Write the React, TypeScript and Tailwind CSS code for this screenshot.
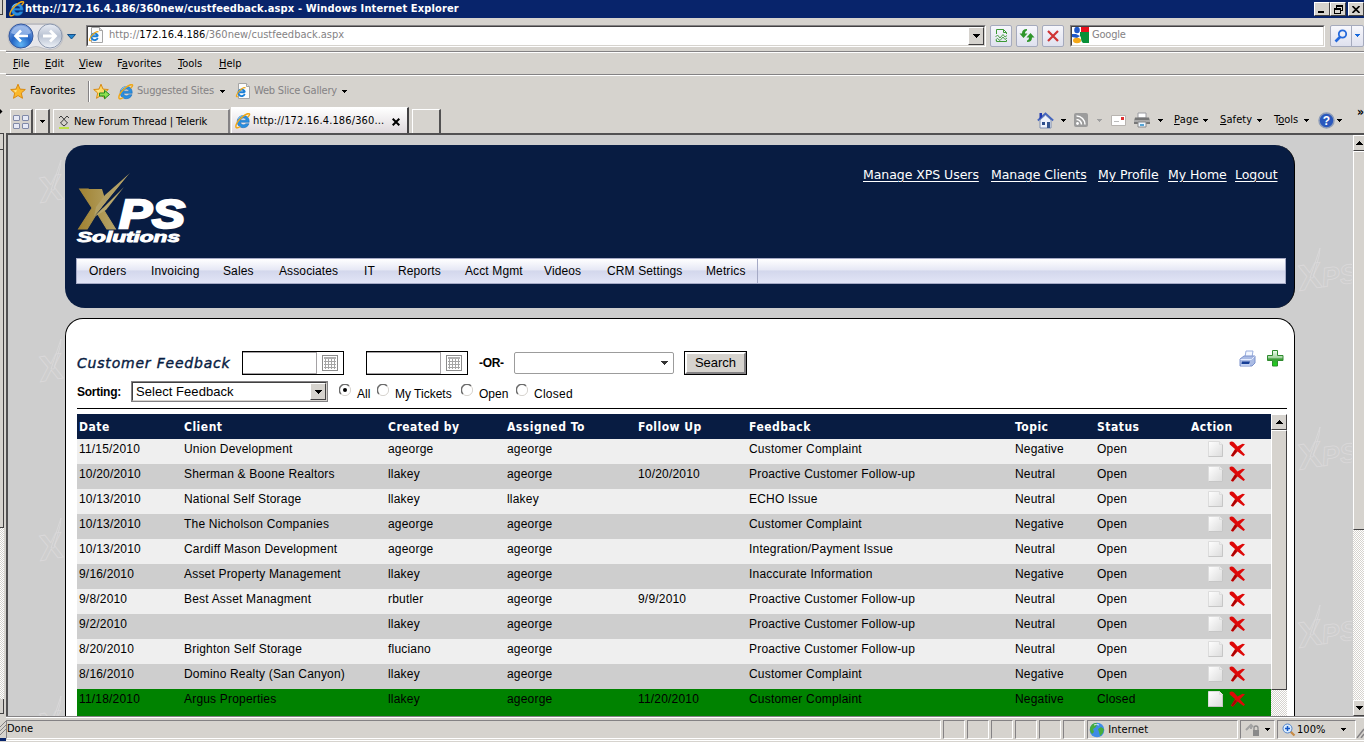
import React from "react";

const bevel = "bg-[#d6d3ce] border border-t-white border-l-white border-b-[#424142] border-r-[#424142]";
const sunken = "border border-t-[#848284] border-l-[#848284] border-b-white border-r-white";
const checker = "bg-[repeating-conic-gradient(#ffffff_0_25%,#d6d3ce_0_50%)] bg-[length:2px_2px]";
const ui = "font-['DejaVu_Sans_Condensed','DejaVu_Sans',sans-serif] text-[11px] whitespace-nowrap";

const Caret = ({ className = "", color = "#000" }: { className?: string; color?: string }) => (
  <svg width="7" height="4" viewBox="0 0 7 4" shapeRendering="crispEdges" className={`shrink-0 ${className}`}>
    <path d="M0 0h7v1h-1v1h-1v1h-1v1h-1v-1h-1v-1h-1v-1h-1z" fill={color} />
  </svg>
);

const SmallCaret = ({ className = "", color = "#000" }: { className?: string; color?: string }) => (
  <svg width="7" height="3" viewBox="0 0 7 3" shapeRendering="crispEdges" className={`shrink-0 ${className}`}>
    <path d="M1 0h5v1h-1v1h-1v1h-1v-1h-1v-1h-1z" fill={color} />
  </svg>
);

const UpArrow = () => (
  <svg width="7" height="4" viewBox="0 0 7 4" shapeRendering="crispEdges" className="shrink-0">
    <path d="M3 0h1v1h1v1h1v1h1v1h-7v-1h1v-1h1v-1h1z" />
  </svg>
);

const IeIcon = ({ size = 16, className = "" }: { size?: number; className?: string }) => (
  <svg width={size} height={size} viewBox="0 0 16 16" className={`shrink-0 ${className}`}>
    <path
      d="M14.2 9.3H5.6c.2 1.600 1.300 2.500 2.900 2.500 1 0 1.800-.4 2.300-1.100h3.200C13.100 13.200 11 14.700 8.400 14.700 4.800 14.700 2.200 12.200 2.200 8.700s2.600-6.200 6.200-6.200c3.700 0 6.100 2.700 5.800 6.800zM5.700 7.200h5.300C10.800 5.900 9.800 5.100 8.400 5.100S6 5.900 5.700 7.200z"
      fill="#2a8fe0"
      stroke="#1260b0"
      strokeWidth=".5"
    />
    <path d="M3.500 5.700C4.400 3.900 6.200 2.900 8.400 2.900" stroke="#8fd4ff" fill="none" />
    <path
      d="M12.600 4.300C14 2.900 15.200 1.700 14.500 1 13.500 0 9.800 1.600 6 5 2.200 8.300.2 12.700 1.100 14.300c.6 1 2.600.3 4.200-.8"
      stroke="#f0a818"
      strokeWidth="1.500"
      fill="none"
    />
  </svg>
);

const PageIeIcon = () => (
  <svg width="16" height="17" viewBox="0 0 16 17" className="shrink-0">
    <path d="M3.500.5h8l3 3v12h-11z" fill="#fbfbfb" stroke="#a5a5a5" />
    <path d="M11.500.5v3h3" fill="#ddd" stroke="#a5a5a5" />
    <path
      d="M9.900 9.300H4.500M9.700 11a3.300 3.300 0 11.200-1.700"
      fill="none"
      stroke="#1b7fd6"
      strokeWidth="1.900"
    />
    <path d="M10.500 5C9 3.800 5 6.500 3 9.500S.7 14.500 3 13.500" fill="none" stroke="#f0a818" strokeWidth="1.200" />
  </svg>
);

const Star = ({ add = false }: { add?: boolean }) => (
  <svg width="17" height="17" viewBox="0 0 17 17" className="shrink-0">
    <path
      d="M8 1.200l2 4.900 5.300.4-4 3.500 1.200 5.300L8 12.500l-4.500 2.800L4.700 10 .7 6.500 6 6.100z"
      fill={add ? "#fdd867" : "#fbb829"}
      stroke="#d98a12"
    />
    <path d="M8 3.500L6.800 7l-3.600.4L6 9.500z" fill="#ffe58d" />
    {add && <path d="M6.500 10h5V7.300l5 4.200-5 4.300V13h-5z" fill="#8ee04f" stroke="#218a21" />}
  </svg>
);

const ToolButton = ({ className = "w-[22px]", children }: { className?: string; children: React.ReactNode }) => (
  <div
    className={`h-[22px] shrink-0 rounded-[2px] border border-[#a5aabd] bg-linear-to-b from-[#f7f7fc] to-[#dfe1ee] flex items-center justify-center ${className}`}
  >
    {children}
  </div>
);

const TitleBar = () => (
  <div className="h-[18px] bg-[#08246b] flex items-center pl-[3px] text-white shrink-0">
    <IeIcon size={16} />
    <span className="font-['DejaVu_Sans_Condensed',sans-serif] font-bold text-[11px] tracking-[0.14px] w-[1292px] whitespace-nowrap">
      http://172.16.4.186/360new/custfeedback.aspx - Windows Internet Explorer
    </span>
    <div className={`w-4 h-[14px] shrink-0 ml-[7px] ${bevel} flex items-end pb-[2px] pl-[3px]`}>
      <div className="w-[6px] h-[2px] bg-black" />
    </div>
    <div className={`w-4 h-[14px] shrink-0 ${bevel} flex items-center justify-center`}>
      <svg width="9" height="9" viewBox="0 0 9 9" shapeRendering="crispEdges">
        <path d="M2 0h7v6h-2v-1h1v-3h-5v1h-1zM0 3h7v6h-7zM1 5v3h5v-3z" fillRule="evenodd" />
      </svg>
    </div>
    <div className={`w-4 h-[14px] shrink-0 ml-[2px] ${bevel} flex items-center justify-center`}>
      <svg width="8" height="7" viewBox="0 0 8 7">
        <path d="M.5 0l7 7M7.500 0l-7 7" stroke="#000" strokeWidth="1.600" />
      </svg>
    </div>
  </div>
);

const AddressBar = () => (
  <div className="h-[33px] flex items-center shrink-0 pt-[2px]">
    <svg width="72" height="30" viewBox="0 0 72 30" className="shrink-0">
      <defs>
        <radialGradient id="back" cx="50%" cy="85%" r="80%">
          <stop offset="0" stopColor="#5fb4f5" />
          <stop offset=".5" stopColor="#2465c4" />
          <stop offset="1" stopColor="#7c9fdc" />
        </radialGradient>
        <linearGradient id="fwd" x1="0" y1="0" x2="0" y2="1">
          <stop offset="0" stopColor="#e9edf5" />
          <stop offset=".5" stopColor="#b9c2d2" />
          <stop offset="1" stopColor="#eef2f8" />
        </linearGradient>
      </defs>
      <path d="M15 2h29a13 13 0 010 27c-7 0-9-3-14-3s-8 3-15 3a13 13 0 010-27z" fill="#c0c0c4" />
      <path d="M15 4h29a12 12 0 010 24c-7 0-9-3-14-3s-8 3-15 3z" fill="#e6e6ea" />
      <circle cx="15" cy="15" r="12" fill="url(#back)" stroke="#34599f" />
      <path d="M5 12a10.500 10.500 0 0120 0c-6 3-14 3-20 0z" fill="#b3cdf2" opacity=".65" />
      <path d="M22 15H10M15 9.500L9.500 15l5.500 5.500" stroke="#fff" strokeWidth="2.600" fill="none" />
      <circle cx="44" cy="15" r="12" fill="url(#fwd)" stroke="#8d99ae" />
      <path d="M37 15h12M44 9.500l5.500 5.500-5.500 5.500" stroke="#fff" strokeWidth="2.800" fill="none" />
      <path d="M61.500 13.500h8l-4 4.500z" fill="#2487d0" stroke="#174f86" />
    </svg>
    <div className={`ml-2 w-[900px] h-[22px] shrink-0 ${sunken}`}>
      <div className="h-full border border-t-[#424142] border-l-[#424142] border-b-[#d6d3ce] border-r-[#d6d3ce] bg-white flex items-center">
        <PageIeIcon />
        <span className={`${ui} text-[#848284] ml-[5px] flex-1`}>
          http://<span className="text-black">172.16.4.186</span>/360new/custfeedback.aspx
        </span>
        <div className={`w-4 h-[18px] ${bevel} flex items-center justify-center`}>
          <Caret />
        </div>
      </div>
    </div>
    <ToolButton className="ml-1 w-[22px]">
      <svg width="13" height="15" viewBox="0 0 13 15" fill="none" stroke="#3c9a35">
        <path d="M1.500 6V1.500h7l3 3V6M8.500 1.500v3h3M1.500 12v1.500h10V12" />
        <path d="M.5 9l2-2 2.500 3 3-3.500 2 2.500 2-1.500M.5 12l2-1.500 2.500 2 3-3.500 2 2.500 2-1.500" strokeWidth=".9" />
      </svg>
    </ToolButton>
    <ToolButton className="ml-1 w-[22px]">
      <svg width="16" height="15" viewBox="0 0 16 15">
        <path d="M8 1C4.500 1 3 2.500 3 5.500H.5L4.500 10l4-4.500H6C6 4 6.500 3 8 2.500z" fill="#2f962b" />
        <path d="M8 14c3.500 0 5-1.500 5-4.500h2.500L11.500 5l-4 4.500H10c0 1.500-.5 2.500-2 3z" fill="#2f962b" />
      </svg>
    </ToolButton>
    <ToolButton className="ml-1 w-[22px]">
      <svg width="12" height="12" viewBox="0 0 12 12">
        <path d="M1 1l10 10M11 1L1 11" stroke="#cf3434" strokeWidth="2.200" />
      </svg>
    </ToolButton>
    <div className={`ml-[6px] w-[255px] h-[22px] shrink-0 ${sunken}`}>
      <div className="h-full border border-t-[#424142] border-l-[#424142] border-b-[#d6d3ce] border-r-[#d6d3ce] bg-white flex items-center">
        <svg width="17" height="17" viewBox="0 0 17 17" className="shrink-0">
          <path d="M9 0h8v5H9z" fill="#e8101c" />
          <path d="M8 5h9v11h-6C8 13 10 11 8 9z" fill="#089038" />
          <ellipse cx="5" cy="3" rx="2.800" ry="3.200" fill="#2058c8" />
          <path d="M0 7h4l4 2-3 2-5-1z" fill="#2058c8" />
          <ellipse cx="5" cy="13.500" rx="4" ry="2.800" fill="#f5a818" />
        </svg>
        <span className={`${ui} text-[#848284] ml-[3px] tracking-[-0.2px]`}>Google</span>
      </div>
    </div>
    <ToolButton className="ml-[5px] w-[22px] rounded-r-none">
      <svg width="14" height="14" viewBox="0 0 14 14" fill="none" stroke="#2469dc">
        <circle cx="8.500" cy="5" r="3.700" strokeWidth="1.800" />
        <path d="M6 8L1.500 12.500" strokeWidth="2.600" />
      </svg>
    </ToolButton>
    <ToolButton className="w-[13px] rounded-l-none -ml-px">
      <SmallCaret color="#1668dc" />
    </ToolButton>
  </div>
);

const menus = [
  { pre: "", key: "F", rest: "ile", w: "w-8" },
  { pre: "", key: "E", rest: "dit", w: "w-[34px]" },
  { pre: "", key: "V", rest: "iew", w: "w-[38px]" },
  { pre: "F", key: "a", rest: "vorites", w: "w-[61px]" },
  { pre: "", key: "T", rest: "ools", w: "w-[41px]" },
  { pre: "", key: "H", rest: "elp", w: "w-10" },
];

const MenuBar = () => (
  <div className={`h-[23px] shrink-0 border-t border-[#848284] flex items-center pl-[7px] shadow-[inset_0_1px_0_#fff] ${ui}`}>
    {menus.map((m) => (
      <span key={m.rest} className={`${m.w} pt-[3px]`}>
        {m.pre}
        <u>{m.key}</u>
        {m.rest}
      </span>
    ))}
  </div>
);

const FavoritesBar = () => (
  <div className={`h-[34px] shrink-0 border-t border-[#848284] shadow-[inset_0_1px_0_#fff] flex items-center pl-1 ${ui}`}>
    <Star />
    <span className="ml-[3px] w-[58px] tracking-[0.1px]">Favorites</span>
    <div className="w-[2px] h-[21px] bg-[#848284] border-r border-white mr-[3px]" />
    <Star add />
    <IeIcon className="ml-[8px]" />
    <span className="ml-[3px] w-[82px] text-[#848284] tracking-[-0.2px]">Suggested Sites</span>
    <SmallCaret />
    <div className="w-[9px]" />
    <PageIeIcon />
    <span className="ml-[3px] w-[87px] text-[#848284] tracking-[-0.2px]">Web Slice Gallery</span>
    <SmallCaret />
  </div>
);

const CommandBar = () => (
  <div className={`flex items-center h-5 mb-[3px] ${ui}`}>
    <svg width="17" height="17" viewBox="0 0 17 17" className="shrink-0">
      <path d="M3 8v8h11V8L8.500 3z" fill="#eef2fb" stroke="#7f8fb0" />
      <path d="M.8 8.500L8.500 1.500l7.700 7" fill="none" stroke="#4565bd" strokeWidth="1.700" />
      <path d="M2.500 1h2.500v4l-2.500 2z" fill="#2038b0" />
      <path d="M5 10h3v3H5z" fill="#2c4d8c" />
      <path d="M10 10h3v6h-3z" fill="#35558f" />
    </svg>
    <SmallCaret className="ml-[6px]" />
    <svg width="14" height="14" viewBox="0 0 14 14" className="ml-[7px] shrink-0">
      <rect width="14" height="14" rx="2" fill="#9c9c9c" />
      <circle cx="3.500" cy="10.500" r="1.400" fill="#fff" />
      <path d="M2.500 6.500a5 5 0 015 5M2.500 3a8.500 8.500 0 018.500 8.500" stroke="#fff" strokeWidth="1.500" fill="none" />
    </svg>
    <SmallCaret className="ml-[8px]" color="#a0a0a0" />
    <svg width="15" height="11" viewBox="0 0 15 11" className="ml-[8px] shrink-0">
      <path d="M.5.500h14v10H.500z" fill="#fff" stroke="#b8b4b0" />
      <path d="M10 2h3v3h-3z" fill="#e03030" />
      <path d="M3 6.500h5" stroke="#bbb" />
    </svg>
    <svg width="16" height="16" viewBox="0 0 16 16" className="ml-[8px] shrink-0">
      <path d="M4 1h8v5H4z" fill="#fff" stroke="#9a9aa0" />
      <path d="M1 5.500h14l1 4v2.500H0V9.500z" fill="#777" />
      <path d="M0 8h16v2H0z" fill="#aaa" />
      <path d="M4 10h8v5H4z" fill="#eef6ff" stroke="#8a8a8a" />
      <path d="M6 12h4v2H6z" fill="#55a5d6" />
    </svg>
    <SmallCaret className="ml-[7px]" />
    <span className="ml-[10px] w-[28px] tracking-[0.2px]">
      <u>P</u>age
    </span>
    <SmallCaret />
    <span className="ml-[11px] w-[36px] tracking-[0.1px]">
      <u>S</u>afety
    </span>
    <SmallCaret />
    <span className="ml-[11px] w-[29px]">
      T<u>o</u>ols
    </span>
    <SmallCaret />
    <svg width="17" height="17" viewBox="0 0 17 17" className="ml-[8px] shrink-0">
      <circle cx="8.500" cy="8.500" r="7.500" fill="#2a58bd" stroke="#8f9db8" strokeWidth="1.500" />
      <text x="8.500" y="12.800" textAnchor="middle" fontSize="12" fontWeight="bold" fill="#fff" fontFamily="Liberation Sans">
        ?
      </text>
    </svg>
    <SmallCaret className="ml-px" />
    <span className="ml-[14px] mb-4 font-bold text-xs">»</span>
  </div>
);

const TabBar = () => (
  <div className={`h-[27px] shrink-0 flex items-end border-b-2 border-[#525152] pl-1 ${ui}`}>
    <div className="w-[23px] h-[24px] border-t border-l border-t-white border-l-white border-r-2 border-r-[#525152] flex items-center justify-center pt-px">
      <div className="grid grid-cols-2 gap-[2px]">
        {[0, 1, 2, 3].map((n) => (
          <div key={n} className="w-[7px] h-[6px] border border-[#8089a8] rounded-[1px] bg-[#e6e9f5]" />
        ))}
      </div>
    </div>
    <div className="ml-[2px] w-[15px] h-[24px] border-t border-l border-t-white border-l-white border-r-2 border-r-[#525152] flex items-center justify-center">
      <SmallCaret />
    </div>
    <div className="ml-[3px] w-[177px] h-[24px] border-t border-l border-t-white border-l-white border-r-2 border-r-[#848284] flex items-center">
      <svg width="12" height="14" viewBox="0 0 12 14" className="ml-1 shrink-0" fill="none">
        <path d="M1 3l2-2 6.500 7L6 11 2.500 8 9 1l2 2" stroke="#3a3a3a" />
        <path d="M1 13h10" stroke="#b5e61d" strokeWidth="1.500" />
      </svg>
      <span className="ml-[4px] pt-px tracking-[-0.07px]">New Forum Thread | Telerik</span>
    </div>
    <div className="ml-px w-[178px] h-[26px] border-t border-l border-t-white border-l-white border-r-2 border-r-[#424142] bg-linear-to-b from-white to-[#ded9dc] flex items-center">
      <IeIcon className="ml-[3px] mt-px" />
      <span className="ml-[2px] w-[139px] pt-[2px] tracking-[0.12px]">http://172.16.4.186/360...</span>
      <svg width="8" height="8" viewBox="0 0 8 8" className="mt-[3px]">
        <path d="M.7.700l6.600 6.600M7.300.700L.7 7.300" stroke="#000" strokeWidth="2" />
      </svg>
    </div>
    <div className="ml-[3px] w-[29px] h-[24px] border-t border-l border-t-white border-l-white border-r-2 border-r-[#525152]" />
    <div className="flex-1" />
    <CommandBar />
  </div>
);

const Watermark = ({ y, side }: { y: number; side: "left" | "right" }) => (
  <svg
    width={side === "left" ? 30 : 56}
    height="50"
    viewBox={side === "left" ? "0 0 30 50" : "0 0 56 50"}
    className={side === "left" ? "absolute left-[29px]" : "absolute right-px"}
    style={{ top: y }}
  >
    <g fill="none" stroke="#dbd9da" strokeWidth=".8" fontFamily="Liberation Sans" fontWeight="bold">
      <text transform="translate(3 45) rotate(-10) skewX(-6)" fontSize="36">
        X
      </text>
      <path d="M14 32L24 2l-1 8-6 22z" />
      {side === "right" && (
        <text transform="translate(27 41) rotate(-8)" fontSize="27" fontStyle="italic">
          PS
        </text>
      )}
    </g>
  </svg>
);

const Logo = () => (
  <svg width="115" height="76" viewBox="0 0 115 76" className="shrink-0">
    <defs>
      <linearGradient id="gold" gradientUnits="userSpaceOnUse" x1="3" y1="0" x2="42" y2="0">
        <stop offset="0" stopColor="#a08232" />
        <stop offset="1" stopColor="#b8a76c" />
      </linearGradient>
    </defs>
    <text
      x="2"
      y="56"
      fontFamily="Liberation Sans"
      fontWeight="bold"
      fontSize="57"
      fill="url(#gold)"
      stroke="url(#gold)"
      textLength="38"
      lengthAdjust="spacingAndGlyphs"
    >
      X
    </text>
    {/* the upper right arm gives way to the two swooshes */}
    <path d="M26.500 15H46L36 36 30 35 22 33 24 27z" fill="#081c42" />
    <path d="M11 16h15l4 13-7 8z" fill="url(#gold)" />
    <path d="M54 0L29 22l-9 12-2 10z" fill="#b3a064" />
    <path d="M18 44L54 0l-6 14z" fill="#081c42" />
    <path d="M48 14L18 44l12-7z" fill="#b8a76c" />
    <g fill="#fff" stroke="#fff" fontFamily="Liberation Sans" fontWeight="bold" fontStyle="italic">
      <text x="43" y="54.500" fontSize="41" textLength="66" lengthAdjust="spacingAndGlyphs" strokeWidth="2.400">
        PS
      </text>
      <text x="1" y="69" fontSize="14.500" textLength="103" lengthAdjust="spacingAndGlyphs" strokeWidth=".9">
        Solutions
      </text>
    </g>
  </svg>
);

const links = [
  { label: "Manage XPS Users", w: "w-[118px]" },
  { label: "Manage Clients", w: "w-[97px]" },
  { label: "My Profile", w: "w-[60px]" },
  { label: "My Home", w: "w-[57px]" },
  { label: "Logout", w: "w-11" },
];

const navItems = [
  { label: "Orders", w: "w-[62px]" },
  { label: "Invoicing", w: "w-[72px]" },
  { label: "Sales", w: "w-[56px]" },
  { label: "Associates", w: "w-[85px]" },
  { label: "IT", w: "w-[34px]" },
  { label: "Reports", w: "w-[67px]" },
  { label: "Acct Mgmt", w: "w-[79px]" },
  { label: "Videos", w: "w-[63px]" },
  { label: "CRM Settings", w: "w-[99px]" },
  { label: "Metrics", w: "w-[51px]" },
];

const SiteHeader = () => (
  <div className="h-[163px] shrink-0 rounded-[20px] bg-[#081c42] border-r border-black pl-[11px] pr-2">
    <div className="flex justify-between h-[113px] pt-[28px]">
      <Logo />
      <div className="flex gap-[10px] -mt-[7px] pr-[7px] h-5 font-['DejaVu_Sans',sans-serif] text-[12.500px] tracking-[-0.05px] text-white">
        {links.map((l) => (
          <a key={l.label} className={`${l.w} underline underline-offset-2 whitespace-nowrap`}>
            {l.label}
          </a>
        ))}
      </div>
    </div>
    <div className="h-[26px] border border-[#a5aac6] bg-[linear-gradient(#ffffff,#e6e8f5_45%,#d3d7ec_50%,#e2e5f6)] flex">
      <div className="w-[681px] pl-3 flex items-center border-r border-[#a5aac6] font-['Liberation_Sans',sans-serif] text-[12px] tracking-[0.12px]">
        {navItems.map((n) => (
          <span key={n.label} className={`${n.w} shrink-0 whitespace-nowrap`}>
            {n.label}
          </span>
        ))}
      </div>
    </div>
  </div>
);

const DateInput = ({ className = "" }: { className?: string }) => (
  <div className={`w-[102px] h-6 shrink-0 border border-black flex ${className}`}>
    <div className="w-[74px] border-r border-b border-t border-[#a5a2a5]" />
    <div className="flex-1 flex items-center justify-center">
      <svg width="16" height="16" viewBox="0 0 16 16" shapeRendering="crispEdges">
        <path d="M.5.500h15v15H.500z" fill="#fff" stroke="#8c8c8c" />
        <path d="M2 2h12v2H2z" fill="#b0b0b0" />
        <path d="M3.500 4v10M6.500 4v10M9.500 4v10M12.500 4v10M2 6.500h12M2 9.500h12M2 12.500h12" stroke="#a5a5a5" />
      </svg>
    </div>
  </div>
);

const Radio = ({ checked = false }: { checked?: boolean }) => (
  <svg width="12" height="12" viewBox="0 0 12 12" className="shrink-0 mb-[3px]">
    <circle cx="6" cy="6" r="5.300" fill="#fff" />
    <path d="M2 10A5.600 5.600 0 0110 2" fill="none" stroke="#6b6b6b" strokeWidth="1.500" />
    <path d="M2 10A5.600 5.600 0 0010 2" fill="none" stroke="#d6d3ce" />
    {checked && <circle cx="6" cy="6" r="2" />}
  </svg>
);

const PrintIcon = () => (
  <svg width="17" height="17" viewBox="0 0 17 17" className="shrink-0">
    <path d="M7 1h7l-1 6H6z" fill="#f3f7ff" stroke="#9aaede" />
    <path d="M1 9l4-3h11v7l-3 3H1z" fill="#aabbe4" stroke="#7c92cc" />
    <path d="M1.500 9.500h11l3-3" stroke="#e6edff" fill="none" />
    <path d="M3 11.500h8l-1 2.500H2.500z" fill="#183f96" />
    <path d="M2 15h9" stroke="#dfe8ff" />
  </svg>
);

const PlusIcon = () => (
  <svg width="17" height="17" viewBox="0 0 17 17" className="shrink-0">
    <defs>
      <linearGradient id="plus" x1="0" y1="0" x2="0" y2="1">
        <stop offset="0" stopColor="#f0fff0" />
        <stop offset=".45" stopColor="#a6d5a3" />
        <stop offset=".55" stopColor="#3f9b3a" />
        <stop offset="1" stopColor="#17df17" />
      </linearGradient>
    </defs>
    <path d="M5.500.5h5v5h5.500v5h-5.500v5.500h-5v-5.500H.500v-5h5z" fill="url(#plus)" stroke="#2f8b2f" />
  </svg>
);

const Filters = () => (
  <>
    <div className="flex items-center h-6 mt-[32px] pl-[11px] font-['Liberation_Sans',sans-serif]">
      <span className="w-[165px] shrink-0 font-['DejaVu_Sans',sans-serif] italic text-[14px] tracking-[0.8px] text-[#081c42] [-webkit-text-stroke:0.4px_#081c42] whitespace-nowrap">
        Customer Feedback
      </span>
      <DateInput />
      <DateInput className="ml-[22px]" />
      <span className="ml-[11px] w-[35px] font-bold text-[12px] tracking-[-0.3px]">-OR-</span>
      <div className="w-[160px] h-[22px] border border-[#9c9c9c] rounded-[2px] flex items-center justify-end pr-[5px]">
        <Caret color="#333" />
      </div>
      <div className="ml-[10px] w-[63px] h-6 border border-black">
        <div className="h-full border-2 border-t-white border-l-white border-b-[#848284] border-r-[#848284] bg-[#d6d3ce] flex items-center justify-center text-[13px]">
          Search
        </div>
      </div>
      <div className="ml-auto flex gap-[11px] pr-[10px] pb-[9px]">
        <PrintIcon />
        <PlusIcon />
      </div>
    </div>
    <div className="flex items-center h-[21px] mt-[6px] ml-[11px] font-['Liberation_Sans',sans-serif] text-[12px] whitespace-nowrap">
      <span className="w-[54px] shrink-0 font-bold tracking-[-0.25px]">Sorting:</span>
      <div className="w-[197px] h-[21px] shrink-0 border border-[#848284] mr-[11px]">
        <div className="h-full border border-t-[#424142] border-l-[#424142] border-b-[#d6d3ce] border-r-[#d6d3ce] flex items-center pl-[3px] text-[13px] tracking-[0.05px]">
          <span className="flex-1">Select Feedback</span>
          <div className={`w-4 h-[17px] ${bevel} flex items-center justify-center`}>
            <Caret />
          </div>
        </div>
      </div>
      <Radio checked />
      <span className="ml-[6px] w-5 pt-[4px]">All</span>
      <Radio />
      <span className="ml-[6px] w-[66px] pt-[4px]">My Tickets</span>
      <Radio />
      <span className="ml-[6px] w-[37px] pt-[4px]">Open</span>
      <Radio />
      <span className="ml-[6px] pt-[4px] tracking-[0.25px]">Closed</span>
    </div>
  </>
);

const DocIcon = () => (
  <svg width="15" height="16" viewBox="0 0 15 16" className="shrink-0">
    <defs>
      <linearGradient id="doc" x1="0" y1="0" x2="1" y2="1">
        <stop offset="0" stopColor="#fff" />
        <stop offset="1" stopColor="#dcdcdc" />
      </linearGradient>
    </defs>
    <path d="M.5.500h11l3 3v12H.500z" fill="url(#doc)" stroke="#dcdcdc" />
    <path d="M.5 15.500h14v-12" fill="none" stroke="#c6c6c6" />
    <path d="M11.500.5v3h3" fill="#eee" stroke="#ddd" />
  </svg>
);

const DeleteIcon = () => (
  <svg width="17" height="16" viewBox="0 0 17 16" className="shrink-0">
    <path
      d="M.5 1.500C1.500.3 3.500 0 5 1.500L8.500 5.500 13.500 2.800 16 3.300 11 8.200l5 5.600-1.500 1.200L8.500 10.500 4 15.800 1.800 14.700 6 8 .8 3.500z"
      fill="#de0808"
    />
    <path d="M6 9l-3.500 5.300 1.500 1L8 10z" fill="#a50505" />
  </svg>
);

interface Ticket {
  date: string;
  client: string;
  createdBy: string;
  assignedTo: string;
  followUp: string;
  feedback: string;
  topic: string;
  status: string;
}

const row = (
  date: string,
  client: string,
  createdBy: string,
  assignedTo: string,
  followUp: string,
  feedback: string,
  topic: string,
  status = "Open"
): Ticket => ({ date, client, createdBy, assignedTo, followUp, feedback, topic, status });

const tickets: Ticket[] = [
  row("11/15/2010", "Union Development", "ageorge", "ageorge", "", "Customer Complaint", "Negative"),
  row("10/20/2010", "Sherman & Boone Realtors", "llakey", "ageorge", "10/20/2010", "Proactive Customer Follow-up", "Neutral"),
  row("10/13/2010", "National Self Storage", "llakey", "llakey", "", "ECHO Issue", "Neutral"),
  row("10/13/2010", "The Nicholson Companies", "ageorge", "ageorge", "", "Customer Complaint", "Negative"),
  row("10/13/2010", "Cardiff Mason Development", "ageorge", "ageorge", "", "Integration/Payment Issue", "Neutral"),
  row("9/16/2010", "Asset Property Management", "llakey", "ageorge", "", "Inaccurate Information", "Negative"),
  row("9/8/2010", "Best Asset Managment", "rbutler", "ageorge", "9/9/2010", "Proactive Customer Follow-up", "Neutral"),
  row("9/2/2010", "", "llakey", "ageorge", "", "Proactive Customer Follow-up", "Neutral"),
  row("8/20/2010", "Brighton Self Storage", "fluciano", "ageorge", "", "Proactive Customer Follow-up", "Neutral"),
  row("8/16/2010", "Domino Realty (San Canyon)", "llakey", "ageorge", "", "Customer Complaint", "Negative"),
  row("11/18/2010", "Argus Properties", "llakey", "ageorge", "11/20/2010", "Customer Complaint", "Negative", "Closed"),
];

const columns = "grid grid-cols-[105px_204px_119px_131px_111px_266px_82px_94px_1fr] pl-[2px] whitespace-nowrap";

const FeedbackTable = () => (
  <div className="ml-[11px] mr-[7px] mt-[6px] border-t border-black pt-[5px] flex flex-1 min-h-0">
    <div className="flex-1 overflow-hidden">
      <div
        className={`${columns} h-[25px] items-center bg-[#081c42] text-white font-bold font-['DejaVu_Sans_Condensed',sans-serif] text-[12px] tracking-[0.5px]`}
      >
        {["Date", "Client", "Created by", "Assigned To", "Follow Up", "Feedback", "Topic", "Status", "Action"].map((h) => (
          <span key={h}>{h}</span>
        ))}
      </div>
      {tickets.map((t, i) => (
        <div
          key={i}
          className={`${columns} pt-[2px] leading-4 font-['Liberation_Sans',sans-serif] text-[12px] tracking-[0.19px] ${
            t.status === "Closed" ? "bg-[#008200] h-[28px]" : i % 2 ? "bg-[#cecece] h-[25px]" : "bg-[#efefef] h-[25px]"
          }`}
        >
          <span>{t.date}</span>
          <span>{t.client}</span>
          <span>{t.createdBy}</span>
          <span>{t.assignedTo}</span>
          <span>{t.followUp}</span>
          <span>{t.feedback}</span>
          <span>{t.topic}</span>
          <span>{t.status}</span>
          <span className="flex gap-[6px] pl-[17px]">
            <DocIcon />
            <DeleteIcon />
          </span>
        </div>
      ))}
    </div>
    <div className={`w-4 ${checker}`}>
      <div className={`h-4 ${bevel} flex items-center justify-center`}>
        <UpArrow />
      </div>
      <div className={`h-[260px] ${bevel}`} />
    </div>
  </div>
);

const PageContent = () => (
  <div className="flex-1 min-h-0 flex bg-[#cecece] border-l-2 border-[#525152] relative overflow-hidden">
    {[23, 202, 381, 559].map((y) => (
      <Watermark key={y} y={y} side="left" />
    ))}
    <div className="w-[1230px] ml-[57px] pt-[10px] flex flex-col shrink-0 z-10">
      <SiteHeader />
      <div className="mt-[10px] flex-1 min-h-0 flex flex-col bg-white border border-b-0 border-black rounded-t-[18px]">
        <Filters />
        <FeedbackTable />
      </div>
    </div>
    <div className="w-[58px] shrink-0 relative overflow-hidden">
      {[111, 290, 468].map((y) => (
        <Watermark key={y} y={y} side="right" />
      ))}
    </div>
    <div className={`flex-1 flex flex-col ${checker}`}>
      <div className={`h-4 ${bevel} border-r-0 flex items-center justify-center shrink-0`}>
        <UpArrow />
      </div>
      <div className={`h-[379px] ${bevel} border-r-0 shrink-0`} />
      <div className="flex-1" />
      <div className={`h-4 ${bevel} border-r-0 flex items-center justify-center shrink-0`}>
        <Caret />
      </div>
    </div>
  </div>
);

const StatusBar = () => (
  <div className={`h-[26px] shrink-0 border-t border-[#848284] shadow-[inset_0_1px_0_#fff] ${ui}`}>
    <div className="h-[24px] pt-[3px] flex gap-[2px] border-b border-white">
      <div className={`w-[936px] h-[19px] ${sunken} flex items-center`}>Done</div>
      {[0, 1, 2, 3, 4, 5].map((n) => (
        <div key={n} className={`w-[22px] h-[19px] ${sunken}`} />
      ))}
      <div className={`w-[151px] h-[19px] ${sunken} flex items-center pl-px`}>
        <svg width="16" height="16" viewBox="0 0 16 16" className="shrink-0">
          <circle cx="8" cy="8" r="7.300" fill="#3f8be6" />
          <path d="M2 4c2-3 5-3.500 6-2.500L7 5 4 7l1 3-2 2C1 9 0 7 2 4zM9 7l3-2 3 2-1 4-3 3-1-4z" fill="#45ad3d" />
          <path d="M5 3a6 6 0 015 0" stroke="#d7eaff" fill="none" />
        </svg>
        <span className="ml-[3px] pt-px tracking-[0.1px]">Internet</span>
      </div>
      <div className={`w-[35px] h-[19px] ${sunken} flex items-center pl-[3px]`}>
        <svg width="16" height="14" viewBox="0 0 16 14" className="shrink-0" fill="none">
          <path d="M2 7l5-5 2 2M7 2v4" stroke="#a3a3a3" strokeWidth="2" />
          <path d="M10 7V5a2 2 0 014 0v2" stroke="#8a8a8a" strokeWidth="1.300" />
          <path d="M9 7h6v6H9z" fill="#8a8a8a" />
        </svg>
        <SmallCaret className="ml-[4px]" />
      </div>
      <div className={`w-[79px] h-[19px] ${sunken} flex items-center pl-[4px]`}>
        <svg width="14" height="14" viewBox="0 0 14 14" className="shrink-0">
          <path d="M8 8l4.500 4.500" stroke="#c78a45" strokeWidth="2.200" />
          <circle cx="5.500" cy="5.500" r="4.500" fill="#d9ecff" stroke="#5585c8" />
          <path d="M5.500 3v5M3 5.500h5" stroke="#1458c8" strokeWidth="1.500" />
        </svg>
        <span className="ml-[1px] w-[43px] pt-px">100%</span>
        <SmallCaret />
      </div>
      <svg width="8" height="18" viewBox="0 0 8 18" className="-ml-[2px]">
        <path d="M1 18L8 9M5 18l3-4" stroke="#848284" strokeWidth="1.500" />
      </svg>
    </div>
  </div>
);

/* Sliver of the window that sits behind the browser */
const BackgroundWindow = () => (
  <div className="w-[6px] shrink-0 bg-[#d6d3ce] flex flex-col">
    <div className="h-[15px] w-[3px] border-r border-b border-[#424142]" />
    <div className="h-[36px] border-b border-white" />
    <div className="h-[23px] border-b border-white" />
    <div className="h-[34px]" />
    <svg width="3" height="7" viewBox="0 0 3 7">
      <path d="M0 1l2.500 2.500L0 6" />
    </svg>
    <div className="h-[18px]" />
    <div className="h-[17px] w-1 border-r border-b border-t border-[#424142]" />
    <div className="h-[378px] w-1 border-r border-b border-[#424142]" />
    <div className={`h-[171px] w-1 ${checker}`} />
    <div className="h-[15px] w-1 border-r border-b border-[#424142]" />
    <svg width="6" height="24" viewBox="0 0 6 24">
      <path d="M0 13l6-6M0 17l6-6M0 21l6-6" stroke="#848284" />
    </svg>
    <div className="h-[3px] bg-[#08246b]" />
  </div>
);

const App: React.FC = () => (
  <div className="w-[1364px] h-[742px] flex overflow-hidden bg-[#d6d3ce] text-black">
    <BackgroundWindow />
    <div className="w-[1358px] shrink-0 flex flex-col overflow-hidden">
      <TitleBar />
      <AddressBar />
      <MenuBar />
      <FavoritesBar />
      <TabBar />
      <PageContent />
      <StatusBar />
    </div>
  </div>
);

export default App;
